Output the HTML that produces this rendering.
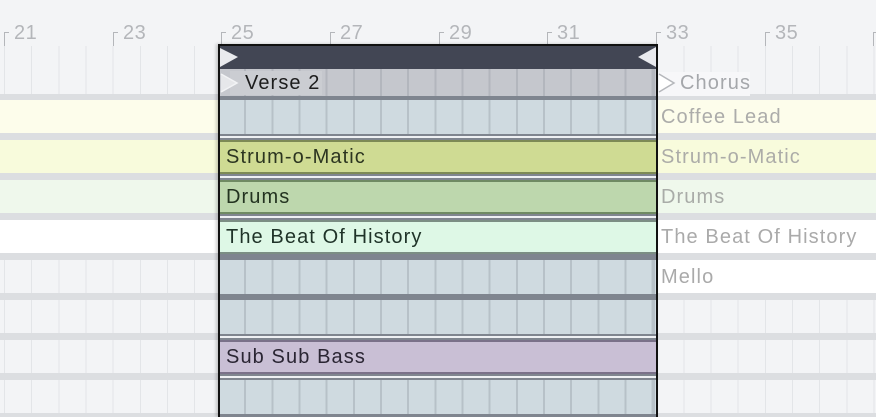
<!DOCTYPE html>
<html><head><style>
*{margin:0;padding:0;box-sizing:border-box}
body{width:876px;height:417px;overflow:hidden;background:#f3f4f6;font-family:"Liberation Sans",sans-serif;position:relative}
.a{position:absolute}
.grid{background-image:repeating-linear-gradient(90deg,#e3e5e8 0 1px,transparent 1px 27.17px);background-position:4px 0}
.num{position:absolute;top:22px;font-size:20px;color:#b4b6ba;letter-spacing:.5px}
.tick{position:absolute;top:32px;width:5px;height:14px;border-left:1px solid #b4b6ba;border-top:1px solid #b4b6ba}
.lbl{position:absolute;left:8px;top:5px;font-size:20px;white-space:nowrap;letter-spacing:1.1px}
.sgrid{background-color:#cfdae0;background-image:repeating-linear-gradient(90deg,#b7c1c8 0 2px,transparent 2px 27.17px);background-position:-3px 0}
</style></head><body>
<div class="a grid" style="left:0;top:46px;width:876px;height:50px;background-color:#f3f4f6"></div>
<div class="tick" style="left:4px"></div><div class="num" style="left:14px">21</div>
<div class="tick" style="left:113px"></div><div class="num" style="left:123px">23</div>
<div class="tick" style="left:221px"></div><div class="num" style="left:231px">25</div>
<div class="tick" style="left:330px"></div><div class="num" style="left:340px">27</div>
<div class="tick" style="left:439px"></div><div class="num" style="left:449px">29</div>
<div class="tick" style="left:547px"></div><div class="num" style="left:557px">31</div>
<div class="tick" style="left:656px"></div><div class="num" style="left:666px">33</div>
<div class="tick" style="left:765px"></div><div class="num" style="left:775px">35</div>
<div class="tick" style="left:873px"></div>
<div class="a" style="left:0;top:94px;width:876px;height:6px;background:#dcdee1"></div>
<div class="a" style="left:0;top:99px;width:876px;height:318px;background:#dcdee1"></div>
<div class="a" style="left:0;top:100px;width:876px;height:33px;background:#fdfdeb"></div>
<div class="a" style="left:0;top:140px;width:876px;height:33px;background:#f8fbdc"></div>
<div class="a" style="left:0;top:180px;width:876px;height:33px;background:#eff8ec"></div>
<div class="a" style="left:0;top:220px;width:876px;height:33px;background:#ffffff"></div>
<div class="a grid" style="left:0;top:260px;width:876px;height:33px;background-color:#f3f4f6"></div>
<div class="a" style="left:658px;top:260px;width:218px;height:33px;background:#fff"></div>
<div class="a grid" style="left:0;top:300px;width:876px;height:33px;background-color:#f3f4f6"></div>
<div class="a grid" style="left:0;top:340px;width:876px;height:33px;background-color:#f3f4f6"></div>
<div class="a grid" style="left:0;top:380px;width:876px;height:33px;background-color:#f3f4f6"></div>
<div class="a" style="left:658px;top:72px;width:92px;height:24px;background:#f7f7f9"></div>
<svg class="a" style="left:658px;top:72px" width="18" height="22"><path d="M1 2 L16 11 L1 20" fill="#fff" stroke="#b5b7bb" stroke-width="1.5"/></svg>
<div class="lbl" style="left:680px;top:72px;color:#a5a7ab">Chorus</div>
<div class="lbl" style="left:661px;top:106px;color:#acacaa">Coffee Lead</div>
<div class="lbl" style="left:661px;top:146px;color:#acaca8">Strum-o-Matic</div>
<div class="lbl" style="left:661px;top:186px;color:#a9aca8">Drums</div>
<div class="lbl" style="left:661px;top:226px;color:#aaaaaa">The Beat Of History</div>
<div class="lbl" style="left:661px;top:266px;color:#aaaaaa">Mello</div>
<div class="a" style="left:218px;top:44px;width:440px;height:373px;background:#7f858f;border:2px solid #111;border-bottom:none;overflow:hidden;box-shadow:-2px 0 3px rgba(0,0,0,.2)">
 <div class="a" style="left:0;top:0;width:436px;height:23px;background:#424654"></div>
 <svg class="a" style="left:0;top:0" width="436" height="23"><path d="M0 2 L18 11 L0 21Z" fill="#e9eaee"/><path d="M436 1 L418 11 L436 21Z" fill="#e9eaee"/></svg>
 <div class="a" style="left:0;top:23px;width:436px;height:27px;background-color:#c5c7cd;background-image:repeating-linear-gradient(90deg,#b3b6bd 0 2px,transparent 2px 27.17px);background-position:-3px 0"></div>
 <div class="a" style="left:10px;top:25px;width:92px;height:24px;background:#cbcdd2"></div>
 <svg class="a" style="left:0;top:26px" width="20" height="22"><path d="M1 2 L17 11 L1 20" fill="#e6e7ea" stroke="#f2f3f5" stroke-width="1.5"/></svg>
 <div class="lbl" style="left:25px;top:26px;color:#1c1c1c">Verse 2</div>
 <div class="a sgrid" style="left:0;top:54px;width:436px;height:34px"></div>
 <div class="a" style="left:0;top:90px;width:436px;height:2px;background:#eef0f3"></div>
 <div class="a" style="left:0;top:94px;width:436px;height:34px;background:#cfdb93;border-top:2px solid #7d8a55;border-bottom:2px solid #7d8a55"><div class="lbl" style="left:6px;top:4px;color:#2c3520">Strum-o-Matic</div></div>
 <div class="a" style="left:0;top:130px;width:436px;height:2px;background:#eef0f3"></div>
 <div class="a" style="left:0;top:134px;width:436px;height:34px;background:#bdd7ad;border-top:2px solid #6f8a63;border-bottom:2px solid #6f8a63"><div class="lbl" style="left:6px;top:4px;color:#233320">Drums</div></div>
 <div class="a" style="left:0;top:170px;width:436px;height:2px;background:#eef0f3"></div>
 <div class="a" style="left:0;top:174px;width:436px;height:34px;background:#def8e6;border-top:2px solid #7c8e84;border-bottom:2px solid #7c8e84"><div class="lbl" style="left:6px;top:4px;color:#1f3328">The Beat Of History</div></div>
 <div class="a sgrid" style="left:0;top:214px;width:436px;height:34px"></div>
 <div class="a sgrid" style="left:0;top:254px;width:436px;height:34px"></div>
 <div class="a" style="left:0;top:290px;width:436px;height:2px;background:#eef0f3"></div>
 <div class="a" style="left:0;top:294px;width:436px;height:34px;background:#c9bfd5;border-top:2px solid #7a7189;border-bottom:2px solid #7a7189"><div class="lbl" style="left:6px;top:4px;color:#2a2533">Sub Sub Bass</div></div>
 <div class="a" style="left:0;top:330px;width:436px;height:2px;background:#eef0f3"></div>
 <div class="a sgrid" style="left:0;top:334px;width:436px;height:34px"></div>
</div>
</body></html>
